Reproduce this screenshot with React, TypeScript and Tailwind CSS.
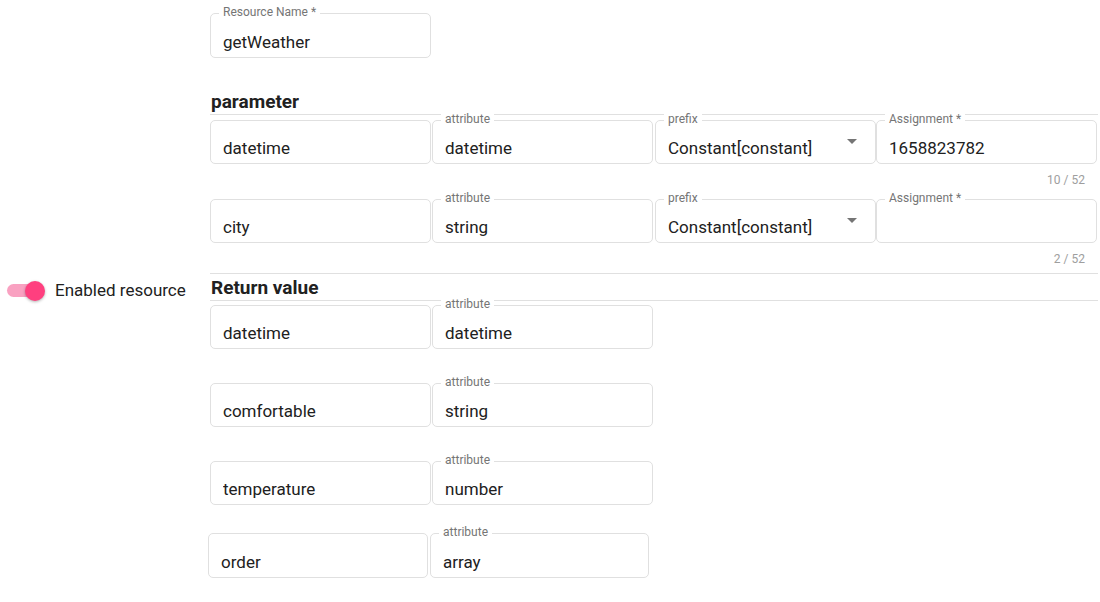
import React from "react";

const font = { fontFamily: "Roboto, 'Liberation Sans', sans-serif" };

function Field({
  label,
  value,
  className = "",
  select = false,
}: {
  label?: string;
  value?: string;
  className?: string;
  select?: boolean;
}) {
  return (
    <div
      className={`relative h-[44px] shrink-0 rounded-[5px] border border-[#e0e0e0] bg-white ${className}`}
    >
      {label && (
        <span className="absolute left-[8px] top-[-9px] bg-white px-[4px] text-[12px] leading-[15px] text-[#757575]">
          {label}
        </span>
      )}
      <div className="flex h-full items-center pl-[12px] pr-[12px] pt-[12px] text-[17px] leading-[20px] text-[#212121]">
        <span className="flex-1 truncate">{value}</span>
        {select && (
          <svg width="10" height="5" viewBox="0 0 10 5" className="mb-[14px] mr-[6px]">
            <path d="M0 0h10L5 5z" fill="#757575" />
          </svg>
        )}
      </div>
    </div>
  );
}

function Counter({ text, h }: { text: string; h: string }) {
  return (
    <div className={`${h} pr-[13px] pt-[8px] text-right text-[12px] leading-[16px] text-[#9e9e9e]`}>
      {text}
    </div>
  );
}

export default function App() {
  return (
    <div className="flex h-[602px] w-[1100px] bg-white" style={font}>
      <div className="w-[210px] shrink-0 pt-[278px]">
        <div className="flex items-center">
          <div className="relative ml-[7px] flex h-[22px] w-[40px] items-center">
            <div className="h-[13px] w-[36px] rounded-full bg-[#f9a1c1]" />
            <div className="absolute left-[18px] top-[1px] h-[20px] w-[20px] rounded-full bg-[#ff3f7f] shadow-[0_1px_3px_rgba(0,0,0,0.3)]" />
          </div>
          <span className="ml-[8px] text-[17px] text-[#212121]">Enabled resource</span>
        </div>
      </div>

      <div className="w-[888px] shrink-0">
        <Field
          label="Resource Name *"
          value="getWeather"
          className="mt-[13px] h-[45px] w-[221px]"
        />

        <div className="mt-[32px] border-b border-[#e0e0e0] pl-[1px] text-[19px] font-bold leading-[24px] text-[#212121]">
          parameter
        </div>

        <div className="mt-[5px] flex">
          <Field value="datetime" className="w-[221px]" />
          <Field label="attribute" value="datetime" className="ml-[1px] w-[221px]" />
          <Field label="prefix" value="Constant[constant]" select className="ml-[2px] w-[221px]" />
          <Field label="Assignment *" value="1658823782" className="w-[221px]" />
        </div>
        <Counter text="10 / 52" h="h-[35px]" />

        <div className="flex">
          <Field value="city" className="w-[221px]" />
          <Field label="attribute" value="string" className="ml-[1px] w-[221px]" />
          <Field label="prefix" value="Constant[constant]" select className="ml-[2px] w-[221px]" />
          <Field label="Assignment *" value="" className="w-[221px]" />
        </div>
        <div className="border-b border-[#e0e0e0]">
          <Counter text="2 / 52" h="h-[30px]" />
        </div>

        <div className="border-b border-[#e0e0e0] pl-[1px] pt-[2px] text-[19px] font-bold leading-[24px] text-[#212121]">
          Return value
        </div>

        <div className="mt-[4px] flex flex-col">
          <div className="flex">
            <Field value="datetime" className="w-[221px]" />
            <Field label="attribute" value="datetime" className="ml-[1px] w-[221px]" />
          </div>
          <div className="mt-[34px] flex">
            <Field value="comfortable" className="w-[221px]" />
            <Field label="attribute" value="string" className="ml-[1px] w-[221px]" />
          </div>
          <div className="mt-[34px] flex">
            <Field value="temperature" className="w-[221px]" />
            <Field label="attribute" value="number" className="ml-[1px] w-[221px]" />
          </div>
          <div className="ml-[-2px] mt-[28px] flex">
            <Field value="order" className="h-[45px] w-[220px]" />
            <Field label="attribute" value="array" className="ml-[2px] h-[45px] w-[219px]" />
          </div>
        </div>
      </div>
    </div>
  );
}
